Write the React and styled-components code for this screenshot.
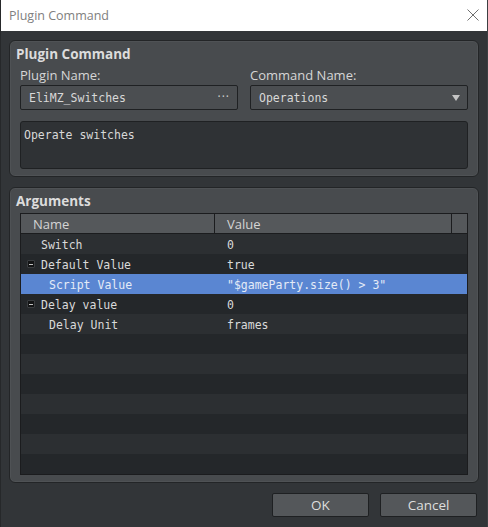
import React from "react";
import styled, { createGlobalStyle } from "styled-components";

const GlobalStyle = createGlobalStyle`
  html, body {
    margin: 0;
    padding: 0;
    background: #2e3134;
  }
  * {
    box-sizing: border-box;
  }
`;

const UI_FONT = `"Open Sans", "Noto Sans", "Liberation Sans", sans-serif`;
const MONO_FONT = `"DejaVu Sans Mono", "Liberation Mono", monospace`;

const Window = styled.div`
  width: 488px;
  height: 527px;
  display: flex;
  flex-direction: column;
  background: #323538;
  border-left: 1px solid #26282a;
  border-right: 1px solid #3c3f42;
  font-family: ${UI_FONT};
`;

const TitleBar = styled.div`
  height: 31px;
  flex: none;
  background: #ffffff;
  display: flex;
  align-items: center;
  justify-content: space-between;
  padding: 0 8px 0 8px;
`;

const Title = styled.span`
  font-size: 12.5px;
  color: #808080;
  margin-top: -1px;
`;

const CloseButton = styled.span`
  width: 14px;
  height: 14px;
  display: flex;
  align-items: center;
  justify-content: center;
  margin-top: -2px;
  margin-right: -1px;
`;

const Body = styled.div`
  flex: 1;
  display: flex;
  flex-direction: column;
  padding: 9px 8px 0 8px;
`;

const Group = styled.section`
  background: #484b4e;
  border: 1px solid #232527;
  border-radius: 6px;
  box-shadow: inset 0 0 0 1px #4f5255;
  padding: 4px 10px 5px 10px;
  height: ${(p) => p.$height}px;
  margin-bottom: ${(p) => p.$gap}px;
  display: flex;
  flex-direction: column;
`;

const GroupTitle = styled.h2`
  margin: 0 0 0 -4px;
  font-size: 13.5px;
  line-height: 18px;
  font-weight: 700;
  color: #dcdcdc;
`;

const FieldRow = styled.div`
  display: grid;
  grid-template-columns: 218px 218px;
  column-gap: 12px;
  margin-top: 4px;
`;

const Field = styled.div`
  display: flex;
  flex-direction: column;
  gap: 2px;
`;

const Label = styled.label`
  font-size: 13px;
  line-height: 16px;
  color: #d6d6d6;
`;

const Input = styled.div`
  height: 25px;
  background: #4b4e51;
  border: 1px solid #1f2123;
  border-radius: 2px;
  display: flex;
  align-items: center;
  justify-content: space-between;
  padding: 0 7px 0 8px;
  font-family: ${MONO_FONT};
  font-size: 11.5px;
  color: #d8d8d8;
`;

const Dots = styled.span`
  font-family: ${UI_FONT};
  font-size: 12px;
  letter-spacing: 1px;
  color: #cfcfcf;
  margin-top: -2px;
`;

const Caret = styled.span`
  width: 0;
  height: 0;
  border-left: 4px solid transparent;
  border-right: 4px solid transparent;
  border-top: 6px solid #c4c4c4;
`;

const Description = styled.div`
  margin-top: 11px;
  height: 48px;
  background: #2f3235;
  border: 1px solid #1f2123;
  border-radius: 3px;
  padding: 5px 3px;
  font-family: ${MONO_FONT};
  font-size: 11.5px;
  line-height: 16px;
  color: #d8d8d8;
`;

const Table = styled.div`
  margin-top: 3px;
  border: 1px solid #1b1c1e;
  display: flex;
  flex-direction: column;
  background: #26292b;
`;

const HeaderRow = styled.div`
  display: grid;
  grid-template-columns: 193px 1fr 16px;
  height: 20px;
  background: #55585b;
  border-bottom: 1px solid #1b1c1e;
`;

const HeaderCell = styled.div`
  font-size: 13px;
  line-height: 21px;
  color: #d4d4d4;
  padding-left: 12px;
  border-left: ${(p) => (p.$divider ? "1px solid #1b1c1e" : "none")};
`;

const Row = styled.div`
  display: grid;
  grid-template-columns: 193px 1fr;
  height: 20px;
  padding-top: 2px;
  align-items: center;
  background: ${(p) =>
    p.$selected ? "#5a86d2" : p.$odd ? "#24272a" : "#2c2f32"};
  font-family: ${MONO_FONT};
  font-size: 11.5px;
  color: ${(p) => (p.$selected ? "#e4ebf7" : "#dadada")};
`;

const NameCell = styled.div`
  display: flex;
  align-items: center;
  padding-left: ${(p) => 20 + p.$level * 8}px;
  position: relative;
`;

const Expander = styled.span`
  position: absolute;
  left: 6px;
  top: 50%;
  margin-top: -5px;
  width: 8px;
  height: 8px;
  background: #131415;
  border: 1px solid #3a3d40;
  border-radius: 1px;
  display: flex;
  align-items: center;
  justify-content: center;

  &::after {
    content: "";
    width: 4px;
    height: 1px;
    background: #c2c2c2;
  }
`;

const ValueCell = styled.div`
  padding-left: 13px;
  white-space: pre;
`;

const Footer = styled.div`
  display: flex;
  justify-content: flex-end;
  gap: 11px;
  padding-right: 2px;
`;

const Button = styled.button`
  width: 97px;
  height: 24px;
  background: #54575a;
  border: 1px solid #1e2022;
  border-radius: 2px;
  color: #dedede;
  font-family: ${UI_FONT};
  font-size: 13.5px;
  line-height: 20px;
  padding: 0;
  cursor: pointer;
`;

const args = [
  { name: "Switch", value: "0", level: 0 },
  { name: "Default Value", value: "true", level: 0, expander: true },
  { name: "Script Value", value: '"$gameParty.size() > 3"', level: 1, selected: true },
  { name: "Delay value", value: "0", level: 0, expander: true },
  { name: "Delay Unit", value: "frames", level: 1 },
];

const TOTAL_ROWS = 12;

const App = () => {
  const rows = Array.from({ length: TOTAL_ROWS }, (_, i) => args[i] || null);

  return (
    <>
      <GlobalStyle />
      <Window>
        <TitleBar>
          <Title>Plugin Command</Title>
          <CloseButton>
            <svg width="12" height="12" viewBox="0 0 12 12">
              <path d="M0.5 0.5 L11.5 11.5 M11.5 0.5 L0.5 11.5" stroke="#6f6f6f" strokeWidth="1" />
            </svg>
          </CloseButton>
        </TitleBar>

        <Body>
          <Group $height={137} $gap={10}>
            <GroupTitle>Plugin Command</GroupTitle>
            <FieldRow>
              <Field>
                <Label>Plugin Name:</Label>
                <Input>
                  <span>EliMZ_Switches</span>
                  <Dots>···</Dots>
                </Input>
              </Field>
              <Field>
                <Label>Command Name:</Label>
                <Input>
                  <span>Operations</span>
                  <Caret />
                </Input>
              </Field>
            </FieldRow>
            <Description>Operate switches</Description>
          </Group>

          <Group $height={296} $gap={10}>
            <GroupTitle>Arguments</GroupTitle>
            <Table>
              <HeaderRow>
                <HeaderCell>Name</HeaderCell>
                <HeaderCell $divider>Value</HeaderCell>
                <HeaderCell $divider />
              </HeaderRow>
              {rows.map((row, i) => (
                <Row key={i} $odd={i % 2 === 1} $selected={row?.selected}>
                  <NameCell $level={row ? row.level : 0}>
                    {row?.expander && <Expander />}
                    {row?.name}
                  </NameCell>
                  <ValueCell>{row?.value}</ValueCell>
                </Row>
              ))}
            </Table>
          </Group>

          <Footer>
            <Button>OK</Button>
            <Button>Cancel</Button>
          </Footer>
        </Body>
      </Window>
    </>
  );
};

export default App;
